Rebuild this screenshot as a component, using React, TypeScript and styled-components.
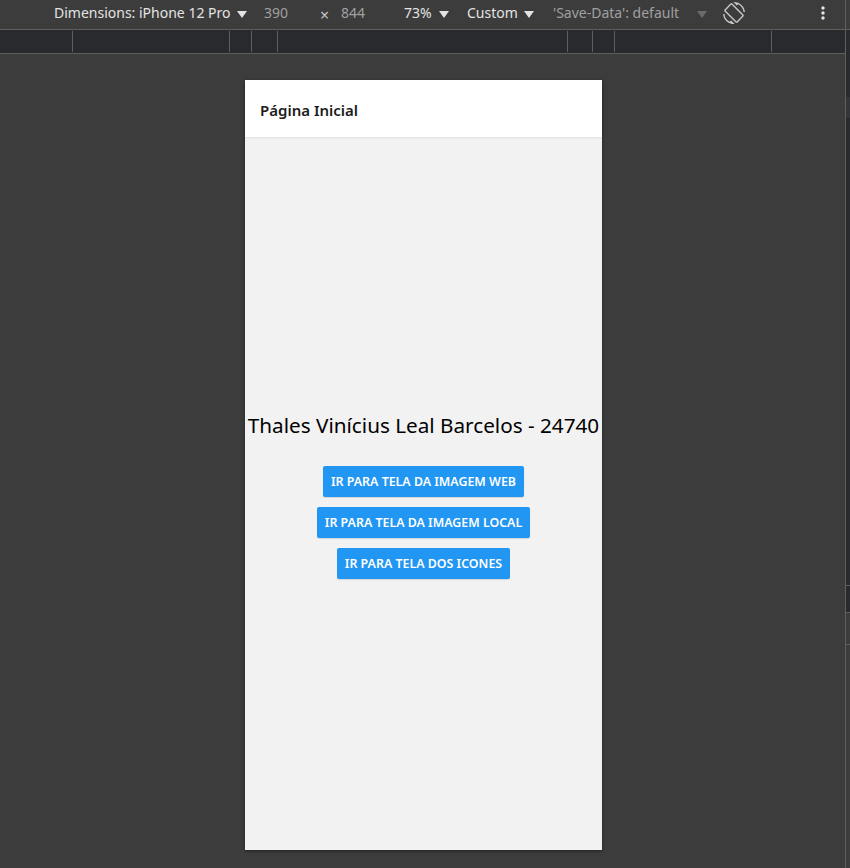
import React from 'react';
import styled, { createGlobalStyle } from 'styled-components';
import { MdScreenRotation, MdMoreVert } from 'react-icons/md';

const GlobalStyle = createGlobalStyle`
  html, body {
    margin: 0;
    padding: 0;
    background: #3c3c3c;
    overflow: hidden;
  }
  * {
    box-sizing: border-box;
  }
`;

const Frame = styled.div`
  display: flex;
  width: 850px;
  height: 868px;
  font-family: 'Noto Sans', 'Open Sans', sans-serif;
`;

const LeftPane = styled.div`
  display: flex;
  flex-direction: column;
  width: 845px;
  height: 100%;
`;

const Separator = styled.div`
  width: 1px;
  height: 100%;
  background: #5f5f5f;
`;

const RightPane = styled.div`
  display: flex;
  flex-direction: column;
  width: 4px;
  height: 100%;
`;

const StripPart = styled.div<{ $h?: number; $bg: string; $line?: boolean }>`
  height: ${(p) => (p.$h ? `${p.$h}px` : 'auto')};
  flex: ${(p) => (p.$h ? '0 0 auto' : '1')};
  background: ${(p) => p.$bg};
  border-bottom: ${(p) => (p.$line ? '1px solid #5f5f5f' : 'none')};
`;

const Toolbar = styled.div`
  display: flex;
  align-items: center;
  height: 30px;
  padding-left: 54px;
  background: #3c3c3c;
  border-bottom: 1px solid #5f5f5f;
  font-size: 14px;
  color: #e3e3e3;
  white-space: nowrap;
`;

const ToolItem = styled.div<{ $w: number; $dim?: boolean }>`
  display: flex;
  align-items: center;
  flex: 0 0 ${(p) => p.$w}px;
  width: ${(p) => p.$w}px;
  height: 100%;
  padding-bottom: 4px;
  color: ${(p) => (p.$dim ? '#a0a0a0' : '#e3e3e3')};
  overflow: visible;
`;

const Caret = styled.span<{ $dim?: boolean }>`
  display: inline-block;
  width: 0;
  height: 0;
  border-left: 5px solid transparent;
  border-right: 5px solid transparent;
  border-top: 7px solid ${(p) => (p.$dim ? '#6b6b6b' : '#e3e3e3')};
  margin-top: 3px;
`;

const Times = styled.span`
  font-size: 16px;
  color: #c4c4c4;
  margin-top: 4px;
`;

const Ruler = styled.div`
  display: flex;
  height: 24px;
  background: #292a2d;
  border-bottom: 1px solid #5f5f5f;
`;

const RulerCell = styled.div<{ $w: number }>`
  flex: 0 0 ${(p) => p.$w}px;
  height: 21px;
  margin-top: 1px;
  border-right: 1px solid #5f5f5f;
`;

const Canvas = styled.div`
  flex: 1;
  display: flex;
  align-items: flex-start;
  padding: 26px 0 0 245px;
  background: #3c3c3c;
`;

const Phone = styled.div`
  display: flex;
  flex-direction: column;
  width: 357px;
  height: 770px;
  background: #f2f2f2;
  box-shadow: 0 1px 3px rgba(0, 0, 0, 0.45);
`;

const Header = styled.div`
  display: flex;
  align-items: center;
  height: 57px;
  padding: 2px 0 0 15px;
  background: #ffffff;
  box-shadow: 0 1px 2px rgba(0, 0, 0, 0.08);
  font-size: 15px;
  font-weight: 600;
  color: #1c1c1c;
  z-index: 1;
`;

const Content = styled.div`
  flex: 1;
  display: flex;
  flex-direction: column;
  align-items: center;
  justify-content: center;
  gap: 10px;
  padding-top: 2px;
`;

const Name = styled.div`
  font-size: 20.7px;
  line-height: 28px;
  color: #000000;
  white-space: nowrap;
  margin-bottom: 17px;
`;

const Button = styled.button`
  display: flex;
  align-items: center;
  justify-content: center;
  height: 31px;
  padding: 0 8px;
  border: none;
  border-radius: 2px;
  background: #2196f3;
  color: #ffffff;
  font-family: inherit;
  font-size: 12.4px;
  font-weight: 600;
  box-shadow: 0 1px 1px rgba(0, 0, 0, 0.12);
  cursor: pointer;
`;

const ticks = [73, 157, 22, 26, 290, 25, 22, 157];

export default function App() {
  return (
    <>
      <GlobalStyle />
      <Frame>
        <LeftPane>
          <Toolbar>
            <ToolItem $w={183}>Dimensions: iPhone 12 Pro</ToolItem>
            <ToolItem $w={27}>
              <Caret />
            </ToolItem>
            <ToolItem $w={56} $dim>390</ToolItem>
            <ToolItem $w={21}>
              <Times>×</Times>
            </ToolItem>
            <ToolItem $w={63} $dim>844</ToolItem>
            <ToolItem $w={35}>73%</ToolItem>
            <ToolItem $w={28}>
              <Caret />
            </ToolItem>
            <ToolItem $w={57}>Custom</ToolItem>
            <ToolItem $w={29}>
              <Caret />
            </ToolItem>
            <ToolItem $w={144} $dim>'Save-Data': default</ToolItem>
            <ToolItem $w={26}>
              <Caret $dim />
            </ToolItem>
            <ToolItem $w={90}>
              <MdScreenRotation size={22} color="#c8c8c8" />
            </ToolItem>
            <ToolItem $w={20}>
              <MdMoreVert size={20} color="#e3e3e3" />
            </ToolItem>
          </Toolbar>
          <Ruler>
            {ticks.map((w, i) => (
              <RulerCell key={i} $w={w} />
            ))}
          </Ruler>
          <Canvas>
            <Phone>
              <Header>Página Inicial</Header>
              <Content>
                <Name>Thales Vinícius Leal Barcelos - 24740</Name>
                <Button>IR PARA TELA DA IMAGEM WEB</Button>
                <Button>IR PARA TELA DA IMAGEM LOCAL</Button>
                <Button>IR PARA TELA DOS ICONES</Button>
              </Content>
            </Phone>
          </Canvas>
        </LeftPane>
        <Separator />
        <RightPane>
          <StripPart $h={30} $bg="#3c3c3c" $line />
          <StripPart $h={67} $bg="#292a2d" />
          <StripPart $h={21} $bg="#343538" />
          <StripPart $h={468} $bg="#292a2d" $line />
          <StripPart $h={27} $bg="#292a2d" $line />
          <StripPart $h={32} $bg="#3c3c3c" $line />
          <StripPart $bg="#3c3c3c" />
        </RightPane>
      </Frame>
    </>
  );
}
